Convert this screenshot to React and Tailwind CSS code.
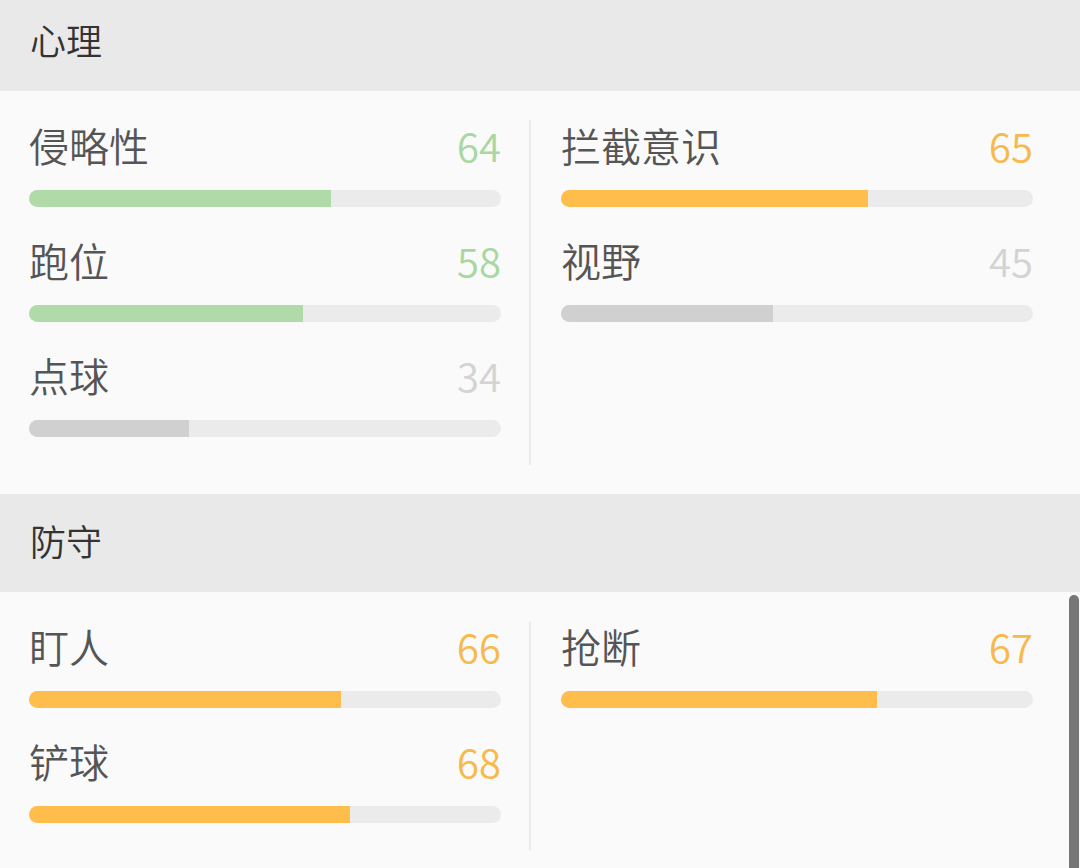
import React from 'react';

const COLORS = {
    green: { text: 'text-[#a8d89f]', bar: 'bg-[#b0dba8]' },
    orange: { text: 'text-[#f8b94c]', bar: 'bg-[#ffbd4b]' },
    gray: { text: 'text-[#d3d3d3]', bar: 'bg-[#d0d0d0]' },
};

const sections = [
    {
        title: '心理',
        left: [
            { name: '侵略性', value: 64, color: 'green' },
            { name: '跑位', value: 58, color: 'green' },
            { name: '点球', value: 34, color: 'gray' },
        ],
        right: [
            { name: '拦截意识', value: 65, color: 'orange' },
            { name: '视野', value: 45, color: 'gray' },
        ],
    },
    {
        title: '防守',
        left: [
            { name: '盯人', value: 66, color: 'orange' },
            { name: '铲球', value: 68, color: 'orange' },
        ],
        right: [{ name: '抢断', value: 67, color: 'orange' }],
    },
];

const StatRow = ({ stat }) => {
    const c = COLORS[stat.color];
    return (
        <div className="pb-[28px]">
            <div className="h-[50px] flex items-center justify-between">
                <span className="text-[40px] leading-none font-[350] text-[#555555]">{stat.name}</span>
                <span className={`text-[40px] leading-none font-[350] ${c.text}`}>{stat.value}</span>
            </div>
            <div className="mt-[20px] h-[17px] rounded-full bg-[#ebebeb] overflow-hidden">
                <div className={`h-full ${c.bar}`} style={{ width: `${stat.value}%` }} />
            </div>
        </div>
    );
};

const Section = ({ section, rows }) => (
    <div>
        <div className="h-[98px] bg-[#e9e9e9] flex items-center pl-[30px] pb-[6px]">
            <span className="text-[36px] leading-none font-[350] text-[#333333]">{section.title}</span>
        </div>
        <div className="bg-[#fafafa] pl-[29px] pt-[29px] pb-[29px]">
            <div className="flex" style={{ height: rows * 115 }}>
                <div className="w-[472px]">
                    {section.left.map((s) => (
                        <StatRow key={s.name} stat={s} />
                    ))}
                </div>
                <div className="w-[2px] bg-[#ececec] ml-[28px] mr-[30px]" />
                <div className="w-[472px]">
                    {section.right.map((s) => (
                        <StatRow key={s.name} stat={s} />
                    ))}
                </div>
            </div>
        </div>
    </div>
);

const App = () => {
    return (
        <div
            className="relative w-[1080px] h-[868px] overflow-hidden bg-[#fafafa]"
            style={{ fontFamily: '"Noto Sans CJK SC", "Noto Sans", sans-serif' }}
        >
            <div className="-mt-[7px]">
                {sections.map((sec) => (
                    <Section key={sec.title} section={sec} rows={Math.max(sec.left.length, sec.right.length)} />
                ))}
            </div>

            {/* scrollbar thumb */}
            <div className="absolute right-[1px] top-[595px] bottom-0 w-[10px] rounded-t-full bg-[#777777]" />
        </div>
    );
};

export default App;
